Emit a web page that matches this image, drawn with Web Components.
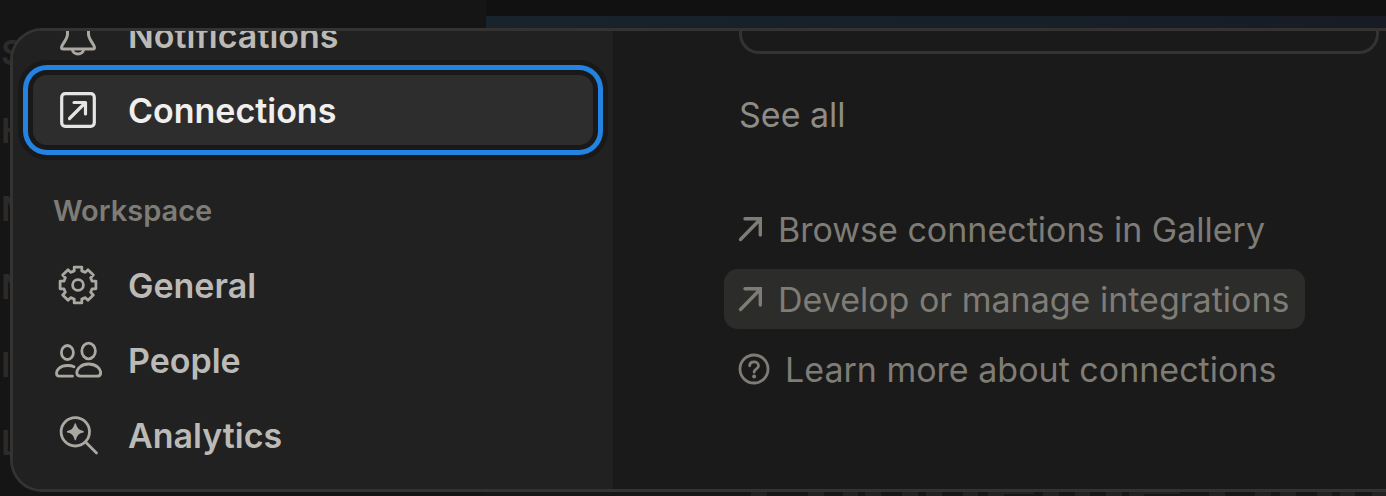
<!DOCTYPE html>
<html lang="en">
<head>
<meta charset="utf-8">
<meta name="viewport" content="width=device-width, initial-scale=1">
<title>Settings</title>
<style>
  html, body {
    margin: 0;
    height: 100%;
    background: #141414;
    overflow: hidden;
  }
  body {
    font-family: Inter, "Liberation Sans", sans-serif;
    font-size: 34px;
    line-height: 44px;
    color: #7f7c76;
  }
</style>
</head>
<body>
<app-shell>
  <page-backdrop slot="backdrop"></page-backdrop>
  <settings-dialog>
    <nav-item slot="nav" icon="bell">Notifications</nav-item>
    <nav-item slot="nav" icon="connections" current>Connections</nav-item>
    <nav-heading slot="nav">Workspace</nav-heading>
    <nav-item slot="nav" icon="gear">General</nav-item>
    <nav-item slot="nav" icon="people">People</nav-item>
    <nav-item slot="nav" icon="analytics">Analytics</nav-item>
    <connections-panel></connections-panel>
  </settings-dialog>
</app-shell>

<script>
const ICONS = {
  bell: `<svg viewBox="0 0 48 48" width="48" height="48" fill="none" stroke="currentColor" stroke-width="3" stroke-linejoin="round" stroke-linecap="round">
    <path d="M24 4C17 4 13.500 9 13.500 16V23C13.500 29 7.500 33 7.500 36.500Q7.500 38 9 38H39Q40.500 38 40.500 36.500C40.500 33 34.500 29 34.500 23V16C34.500 9 31 4 24 4Z"/>
    <path d="M18.500 38.500a5.500 4.500 0 0 0 11 0"/></svg>`,
  connections: `<svg viewBox="0 0 48 48" width="48" height="48" fill="none" stroke="currentColor" stroke-width="3.200" stroke-linejoin="round" stroke-linecap="round">
    <rect x="7.700" y="7.700" width="32.600" height="32.600" rx="3.500"/>
    <path d="M15.500 32.500L31 17M20 16.500H31.500V28"/></svg>`,
  people: `<svg viewBox="0 0 48 48" width="48" height="48" fill="none" stroke="currentColor" stroke-width="2.800" stroke-linejoin="round" stroke-linecap="round">
    <g transform="translate(0 -3)">
    <ellipse cx="13.400" cy="19.500" rx="6" ry="7"/>
    <ellipse cx="34.600" cy="18" rx="6.800" ry="7.800"/>
    <path d="M20 33.800C18.500 33 16 32.500 13.400 32.500C6 32.500 2.500 37 2.500 40.300C2.500 42 3.700 43.200 5.500 43.200H18.500"/>
    <path d="M34.600 31C27 31 22.800 36 22.800 39.600C22.800 41.800 24.300 43.200 26.500 43.200H43C45.200 43.200 46.700 41.800 46.700 39.600C46.700 36 42.200 31 34.600 31Z"/>
    </g></svg>`,
  analytics: `<svg viewBox="0 0 48 48" width="48" height="48" fill="none" stroke="currentColor" stroke-width="2.800" stroke-linecap="round">
    <circle cx="21.300" cy="20.800" r="14.200"/>
    <path d="M32.500 32L42.500 42"/>
    <path d="M21.300 13Q22.500 19.600 29.100 20.800Q22.500 22 21.300 28.600Q20.100 22 13.500 20.800Q20.100 19.600 21.300 13Z" fill="currentColor" stroke-width="1.400" stroke-linejoin="round"/></svg>`,
  arrow: `<svg viewBox="0 0 30 32" width="30" height="32" fill="none" stroke="currentColor" stroke-width="3.400" stroke-linejoin="miter" stroke-linecap="round">
    <path d="M2.500 26.500L21.500 7M7 5.700H22.300V22"/></svg>`,
  help: `<svg viewBox="0 0 32 32" width="32" height="32" fill="none" stroke="currentColor" stroke-width="2.800" stroke-linecap="round">
    <circle cx="16" cy="16" r="14"/>
    <path d="M11.700 12.800C11.700 10.300 13.500 8.900 16.100 8.900C18.700 8.900 20.500 10.500 20.500 12.700C20.500 16 16.100 15.700 16.100 19.200"/>
    <circle cx="16.100" cy="23.500" r="2" fill="currentColor" stroke="none"/></svg>`,
  gear: gearIcon(),
};

// Eight teeth around a small hub
function gearIcon() {
  const point = (radius, deg) => {
    const a = deg * Math.PI / 180;
    return (24 + radius * Math.sin(a)).toFixed(2) + " " + (24 - radius * Math.cos(a)).toFixed(2);
  };
  const points = [];
  for (let i = 0; i < 8; i++) {
    const c = i * 45;
    points.push(point(14.6, c - 15), point(18.3, c - 12), point(18.3, c + 12), point(14.6, c + 15));
  }
  return `<svg viewBox="0 0 48 48" width="48" height="48" fill="none" stroke="currentColor" stroke-width="2.800" stroke-linejoin="round">
    <path d="M${points.join("L")}Z"/><circle cx="24" cy="24" r="5.400"/></svg>`;
}

class AppShell extends HTMLElement {
  constructor() {
    super();
    this.attachShadow({ mode: "open" }).innerHTML = `
      <style>
        :host {
          display: grid;
          height: 100vh;
          overflow: hidden;
        }
        .backdrop, .front {
          grid-area: 1 / 1;
          min-width: 0;
          min-height: 0;
        }
        .front {
          display: grid;
          padding: 28px 0 4px 10px;
          z-index: 1;
        }
      </style>
      <div class="backdrop"><slot name="backdrop"></slot></div>
      <div class="front"><slot></slot></div>
    `;
  }
}

// Dimmed page that stays visible around the dialog
class PageBackdrop extends HTMLElement {
  constructor() {
    super();
    this.attachShadow({ mode: "open" }).innerHTML = `
      <style>
        :host {
          display: grid;
          grid-template-columns: 486px 1fr;
          height: 100vh;
          color: #2b2b2b;
        }
        .side {
          display: flex;
          flex-direction: column;
          padding: 14px 0 0 1px;
          font-weight: 600;
          background: #151515;
        }
        .side span {
          line-height: 78px;
        }
        .main {
          display: flex;
          flex-direction: column;
          min-width: 0;
          background: #111;
        }
        .cover {
          height: 60px;
          margin-top: 16px;
          background: linear-gradient(90deg, #18232b, #171e27 80%, #181b24);
        }
        .title {
          margin-top: auto;
          height: 4px;
          background: #171717;
          overflow: hidden;
        }
        svg {
          display: block;
        }
      </style>
      <div class="side">
        <span>S</span><span>H</span><span>N</span><span>N</span><span>I</span><span>L</span>
      </div>
      <div class="main">
        <div class="cover"></div>
        <div class="title">
          <svg width="900" height="4" fill="#232323">
            <path d="M265 0h16v4h-16zM322 0h16v4h-16zM357 0h15v4h-15zM379 0h16v4h-16zM416 0h16v4h-16zM440 0h16v4h-16zM477 0h15v4h-15zM502 0h46v2h-30v2h-16zM557 0h16v4h-16zM589 0h15v4h-15zM620 0h16v4h-16zM643 0h51v2h-36v2h-15zM723 0h16v4h-16zM769 0h16v4h-16zM794 0h16v4h-16zM831 0h15v4h-15zM854 0h15v4h-15zM886 0h14v4h-14z"/>
          </svg>
        </div>
      </div>
    `;
  }
}

class SettingsDialog extends HTMLElement {
  constructor() {
    super();
    this.attachShadow({ mode: "open" }).innerHTML = `
      <style>
        :host {
          display: grid;
          grid-template-columns: 600px 1fr;
          min-height: 0;
          border: 3px solid #343332;
          border-right: 0;
          border-radius: 32px 0 0 32px;
          background: #1a1a1a;
          overflow: hidden;
        }
        nav {
          display: flex;
          flex-direction: column;
          justify-content: flex-end;
          gap: 5px;
          padding: 0 20px 19px;
          min-height: 0;
          background: #212121;
        }
        main {
          min-width: 0;
          min-height: 0;
        }
      </style>
      <nav aria-label="Settings"><slot name="nav"></slot></nav>
      <main><slot></slot></main>
    `;
  }
}

class NavItem extends HTMLElement {
  constructor() {
    super();
    this.attachShadow({ mode: "open" });
  }

  connectedCallback() {
    const current = this.hasAttribute("current");
    this.shadowRoot.innerHTML = `
      <style>
        :host {
          display: block;
          flex-shrink: 0;
        }
        a {
          display: flex;
          align-items: center;
          gap: 26px;
          height: 70px;
          padding-left: 21px;
          border-radius: 14px;
          color: #bcbab6;
          font-weight: 600;
          text-decoration: none;
        }
        a[aria-current] {
          color: #f0efed;
          background: #2d2d2d;
          box-shadow: 0 0 0 5px #191919, 0 0 0 10px #2383e2, 0 0 0 15px #191919;
        }
        span {
          padding-top: 2px;
        }
        svg {
          display: block;
          flex-shrink: 0;
          color: #aba8a2;
        }
        a[aria-current] svg {
          color: #e6e5e3;
        }
      </style>
      <a href="#${this.getAttribute("icon")}" ${current ? 'aria-current="page"' : ""}>
        ${ICONS[this.getAttribute("icon")]}
        <span><slot></slot></span>
      </a>
    `;
  }
}

class NavHeading extends HTMLElement {
  constructor() {
    super();
    this.attachShadow({ mode: "open" }).innerHTML = `
      <style>
        :host {
          display: block;
          flex-shrink: 0;
          padding: 41px 20px 14px;
          font-size: 29px;
          font-weight: 600;
          line-height: 40px;
          color: #7f7c76;
        }
      </style>
      <slot></slot>
    `;
  }
}

class ActionLink extends HTMLElement {
  constructor() {
    super();
    this.attachShadow({ mode: "open" });
  }

  connectedCallback() {
    this.shadowRoot.innerHTML = `
      <style>
        :host {
          display: block;
        }
        a {
          display: inline-flex;
          align-items: center;
          gap: 10px;
          height: 60px;
          padding: 0 16px 0 14px;
          border-radius: 14px;
          box-sizing: border-box;
          color: #7f7c76;
          text-decoration: none;
          white-space: nowrap;
        }
        :host([icon="help"]) a {
          gap: 15px;
        }
        :host([highlighted]) a {
          background: #2c2c2b;
        }
        span {
          padding-top: 2px;
        }
        svg {
          display: block;
          flex-shrink: 0;
        }
      </style>
      <a href="#">${ICONS[this.getAttribute("icon")]}<span><slot></slot></span></a>
    `;
  }
}

class ConnectionsPanel extends HTMLElement {
  constructor() {
    super();
    this.attachShadow({ mode: "open" }).innerHTML = `
      <style>
        :host {
          display: block;
          padding: 0 7px 0 111px;
        }
        .card {
          height: 23px;
          margin-left: 15px;
          border: 3px solid #333332;
          border-top: 0;
          border-radius: 0 0 20px 20px;
          box-sizing: border-box;
        }
        button {
          display: block;
          margin: 39px 0 62px 15px;
          padding: 0;
          border: 0;
          background: none;
          font: inherit;
          color: #8f8c87;
        }
        .links {
          display: flex;
          flex-direction: column;
          gap: 10px;
        }
      </style>
      <div class="card"></div>
      <button type="button">See all</button>
      <div class="links">
        <action-link icon="arrow">Browse connections in Gallery</action-link>
        <action-link icon="arrow" highlighted>Develop or manage integrations</action-link>
        <action-link icon="help">Learn more about connections</action-link>
      </div>
    `;
  }
}

customElements.define("app-shell", AppShell);
customElements.define("page-backdrop", PageBackdrop);
customElements.define("settings-dialog", SettingsDialog);
customElements.define("nav-item", NavItem);
customElements.define("nav-heading", NavHeading);
customElements.define("action-link", ActionLink);
customElements.define("connections-panel", ConnectionsPanel);
</script>
</body>
</html>
